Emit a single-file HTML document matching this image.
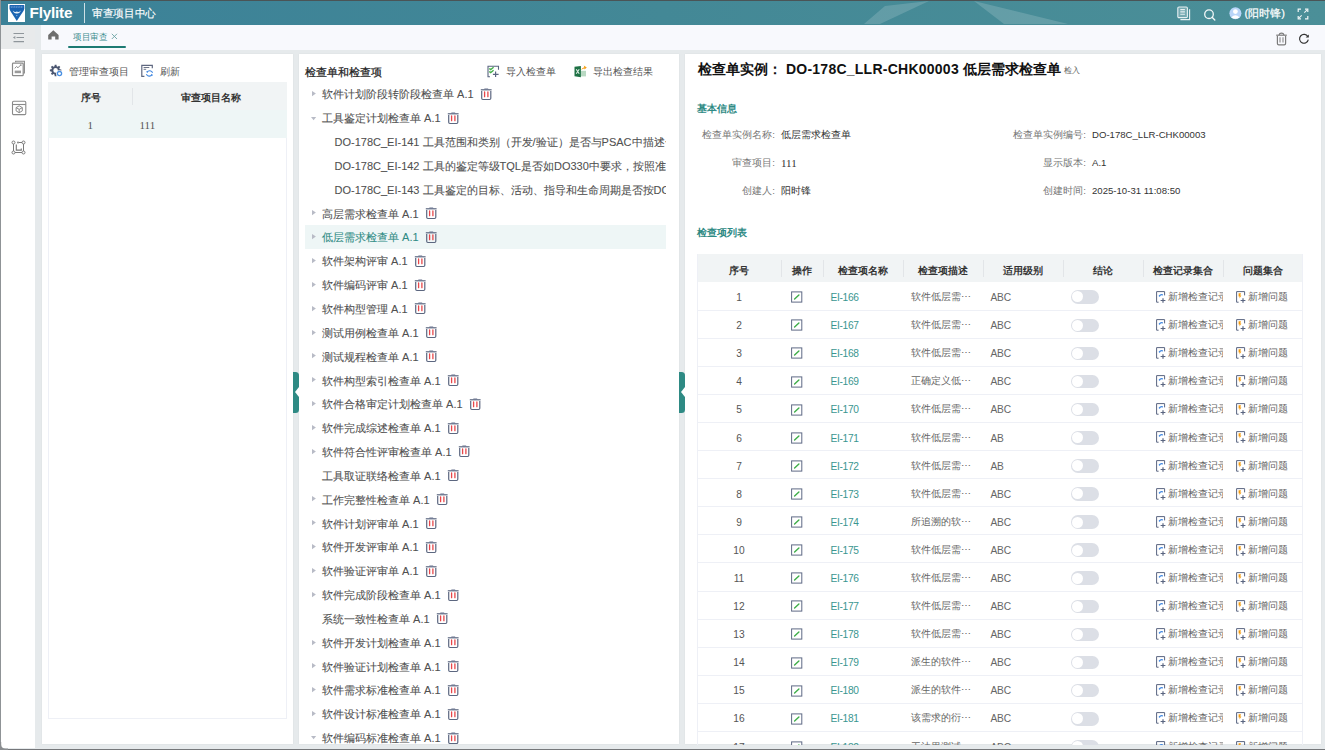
<!DOCTYPE html>
<html><head><meta charset="utf-8">
<style>
*{box-sizing:border-box;margin:0;padding:0}
html,body{width:1325px;height:750px;overflow:hidden;background:#e6eaec;font-family:"Liberation Sans",sans-serif;color:#333}
.abs{position:absolute}
#frtop{left:0;top:0;width:1325px;height:1px;background:#4a5456}
#frleft{left:0;top:0;width:1px;height:750px;background:#8f9396}
#frbot{left:0;top:748.6px;width:1325px;height:1.4px;background:#75777a}
#header{left:1px;top:1px;width:1324px;height:24px;background:linear-gradient(90deg,#3b8198 0%,#438896 50%,#4b8f98 100%);overflow:hidden}
#sidebar{left:1px;top:25px;width:34px;height:723px;background:#fff}
#collapse{left:1px;top:25px;width:34px;height:23.5px;background:#e8eaeb}
#tabbar{left:41px;top:25px;width:1284px;height:25px;background:#f8f9fd}
.panel{background:#fff;box-shadow:0 0 1.5px rgba(0,0,0,0.07)}
.t{position:absolute;white-space:nowrap;line-height:1}
svg{position:absolute;overflow:visible}
.tree{position:absolute;left:305px;top:82px;width:361px;height:662px;overflow:hidden}
.tr{position:relative;height:23.85px;line-height:23.85px;white-space:nowrap;font-size:11px;color:#505050;padding-left:17px;-webkit-text-stroke:0.08px currentColor}
.tr span{position:relative;top:1.4px}
.tr.l1{padding-left:29.5px}
.tr.sel{background:#eef6f6;color:#2e8b84}
.ar{position:absolute;left:6.7px;top:9.1px}
.ad{position:absolute;left:5.9px;top:10.7px}
.tbi{position:relative;display:inline-block;vertical-align:middle;margin-left:6px;top:-0.3px}
.info{position:absolute;height:10px;white-space:nowrap;font-size:9.6px;line-height:10px}
.info .lb{position:absolute;right:-90px;width:200px;text-align:right;color:#777}
.info .vl{position:absolute;left:96px;color:#333}
.tblwrap{position:absolute;left:697px;top:254px;width:606px;height:490.5px;overflow:hidden;border-left:1px solid #eef0f6;border-right:1px solid #eef0f6}
.grid{border-collapse:collapse;table-layout:fixed;width:606px;font-size:9.6px;margin-left:-1px}
.grid th{height:28px;background:#f1f4f5;font-weight:bold;color:#333;text-align:center;position:relative;padding:10.5px 0 0 0;vertical-align:top;line-height:12px}
.grid th+th:before{content:"";position:absolute;left:0;top:6px;height:16.5px;width:1px;background:#e2e5e8}
.grid td{height:28.1px;border-bottom:1px solid #eef0f6;padding:3px 0 0 0;white-space:nowrap;overflow:hidden;color:#666;position:relative}
.grid td.c1{text-align:center;color:#555;font-size:10.2px}
.grid td.c2{padding-left:9.5px}
.grid td.c3{color:#3a9690;padding-left:7.5px;font-size:10.2px;letter-spacing:-0.3px}
.grid td.c4{padding-left:8px}
.grid td.c5{padding-left:7.5px;font-size:10.2px;letter-spacing:-0.2px}
.ed{position:relative;display:inline-block;vertical-align:middle;top:-0.5px}
.ic{position:relative;display:inline-block;vertical-align:middle;top:-0.5px;margin-right:1px}
.grid td.c7{padding-left:12.5px;text-overflow:clip}
.grid td.c8{padding-left:12.5px}
.tg{position:absolute;left:8px;top:8px;width:27.6px;height:13.6px;border-radius:7px;background:#dcdfe6}
.tg:after{content:"";position:absolute;left:1.3px;top:1.3px;width:11px;height:11px;border-radius:50%;background:#fff}
.handle{position:absolute;top:372px;width:6px;height:41px;background:#2e8a84;border-radius:0 3.5px 3.5px 0}
.handle:after{content:"";position:absolute;right:0;top:15px;border-top:5px solid transparent;border-bottom:5px solid transparent;border-right:4.2px solid #fff}

</style></head><body>
<div class="abs" id="header">
  <svg width="1324" height="24" style="left:0;top:0">
    <polygon points="863,23 884,5 928,0 879,23" fill="rgba(255,255,255,0.16)"/>
    <polygon points="973,0 1003,23 1067,23" fill="rgba(255,255,255,0.16)"/>
  </svg>
</div>
<!-- logo -->
<div class="abs" style="left:7.6px;top:4px;width:17.5px;height:17.8px;background:#fff"></div>
<svg class="abs" style="left:7.6px;top:4px" width="18" height="18" viewBox="0 0 18 18">
  <path d="M1.5 1.7 Q1.5 1.1 2.1 1.1 H15.7 Q16.3 1.1 16.3 1.7 V4.2 Q16.2 5.6 15.6 6.8 L8.8 16.9 L2.2 6.8 Q1.6 5.6 1.5 4.2 Z" fill="#1b64b2"/>
  <path d="M2.6 2.4 H15.2 M2.8 3.4 H15" stroke="#7fa9dc" stroke-width="0.6" stroke-dasharray="1.2 0.5"/>
  <path d="M4.8 6.4 Q6.8 8.6 8.8 7.6 Q10.8 8.6 12.8 6.4 Q12 9.6 8.8 9.4 Q5.6 9.6 4.8 6.4Z" fill="#e4eef8"/>
  <circle cx="8.8" cy="11.6" r="0.55" fill="#a9c6ea"/>
</svg>
<div class="t" style="left:29.5px;top:5.2px;font-size:15.3px;font-weight:bold;color:#fff;letter-spacing:-0.2px">Flylite</div>
<div class="abs" style="left:84px;top:3px;width:1px;height:20px;background:rgba(255,255,255,0.75)"></div>
<div class="t" style="left:92px;top:8.3px;font-size:10.6px;color:#fff;-webkit-text-stroke:0.15px #fff;transform:scaleX(0.97);transform-origin:0 0">审查项目中心</div>
<!-- header right icons -->
<svg class="abs" style="left:1176px;top:6px" width="16" height="16" viewBox="0 0 16 16">
  <rect x="1.8" y="1" width="9.6" height="10.6" rx="1.2" fill="rgba(255,255,255,0.25)" stroke="#e6f0f2" stroke-width="1.1"/>
  <path d="M13.6 3.2 V13.6 H4.4" fill="none" stroke="#e6f0f2" stroke-width="1.1"/>
  <path d="M4.3 3.6 H8.9 M4.3 5.9 H8.9 M4.3 8.3 H8.9" stroke="#e6f0f2" stroke-width="1.1"/>
</svg>
<svg class="abs" style="left:1202px;top:7px" width="16" height="16" viewBox="0 0 16 16">
  <circle cx="7" cy="7.2" r="4.3" fill="none" stroke="#f2f7f8" stroke-width="1.3"/>
  <path d="M10.1 10.3 L12.8 13" stroke="#f2f7f8" stroke-width="1.4" stroke-linecap="round"/>
</svg>
<svg class="abs" style="left:1229px;top:7px" width="13" height="13" viewBox="0 0 13 13">
  <circle cx="6.4" cy="6.2" r="6" fill="#b9d5f8"/>
  <circle cx="6.4" cy="4.6" r="2.4" fill="#fff"/>
  <path d="M2.2 10.4 Q6.4 6.2 10.6 10.4 Q6.4 13.2 2.2 10.4Z" fill="#fff"/>
</svg>
<div class="t" style="left:1244.5px;top:7.8px;font-size:11px;color:#fff;-webkit-text-stroke:0.2px #fff">(阳时锋)</div>
<svg class="abs" style="left:1297px;top:7.5px" width="12" height="12" viewBox="0 0 12 12">
  <path d="M1.2 4 V1.2 H4 M8 1.2 H10.8 V4 M10.8 8 V10.8 H8 M4 10.8 H1.2 V8" fill="none" stroke="#eef5f6" stroke-width="1.2"/>
  <path d="M7.3 4.7 L10.2 1.8 M4.7 7.3 L1.8 10.2" stroke="#eef5f6" stroke-width="1.1"/>
</svg>
<div class="abs" id="frtop"></div>
<div class="abs" id="sidebar"></div>
<div class="abs" id="collapse"></div>
<div class="abs" id="tabbar"></div>
<!-- sidebar icons -->
<svg class="abs" style="left:12px;top:32px" width="13" height="12" viewBox="0 0 13 12">
  <path d="M1.5 1.5 H12 M4.5 5.5 H12 M1.5 9.6 H12" stroke="#8f969b" stroke-width="1.1"/>
  <path d="M3.3 3.9 L0.9 5.5 L3.3 7.1Z" fill="#8f969b"/>
</svg>
<svg class="abs" style="left:11px;top:60px" width="16" height="17" viewBox="0 0 16 17">
  <path d="M4.6 2.2 V1.2 H13.4 V13 H12.2" fill="none" stroke="#8a8a8a" stroke-width="1.1"/>
  <rect x="1.5" y="3.2" width="10.7" height="12.5" rx="0.8" fill="#fff" stroke="#8a8a8a" stroke-width="1.2"/>
  <path d="M3.7 8.4 L5.6 6.5 L7 7.8 L9.3 5.3" fill="none" stroke="#8a8a8a" stroke-width="1"/>
  <circle cx="9.8" cy="5.1" r="0.9" fill="#8a8a8a"/>
  <rect x="3.7" y="10.6" width="6.3" height="2.6" fill="#9a9a9a"/>
</svg>
<svg class="abs" style="left:11px;top:100px" width="16" height="16" viewBox="0 0 16 16">
  <rect x="1.5" y="1.2" width="13.3" height="13.4" rx="1.2" fill="none" stroke="#8a8a8a" stroke-width="1.1"/>
  <path d="M1.5 4.5 H14.8" stroke="#8a8a8a" stroke-width="1.1"/>
  <path d="M8.2 5.8 L11.3 7.6 V10.9 L8.2 12.7 L5.1 10.9 V7.6Z M5.1 7.6 L8.2 9.4 L11.3 7.6 M8.2 9.4 V12.7" fill="none" stroke="#8a8a8a" stroke-width="1"/>
</svg>
<svg class="abs" style="left:10px;top:139px" width="17" height="17" viewBox="0 0 17 17">
  <path d="M3.5 4.8 V12.2 M4.8 13.5 H12.2 M13.5 12.2 V4.8 M12.2 3.5 H9" fill="none" stroke="#7a7a7a" stroke-width="1"/>
  <circle cx="3.5" cy="3.5" r="1.5" fill="#fff" stroke="#7a7a7a" stroke-width="1"/>
  <circle cx="13.5" cy="3.5" r="1.5" fill="#fff" stroke="#7a7a7a" stroke-width="1"/>
  <circle cx="3.5" cy="13.5" r="1.5" fill="#fff" stroke="#7a7a7a" stroke-width="1"/>
  <circle cx="13.5" cy="13.5" r="1.5" fill="#fff" stroke="#7a7a7a" stroke-width="1"/>
  <circle cx="8" cy="3.5" r="0.9" fill="#7a7a7a"/>
  <path d="M6.3 5.6 V11.1 H11.3 V9.5" fill="none" stroke="#7a7a7a" stroke-width="1.1"/>
</svg>
<!-- tab bar -->
<svg class="abs" style="left:47.5px;top:29.5px" width="11" height="10" viewBox="0 0 11 10">
  <path d="M5.3 0.3 L10.6 5 V9.5 H7.2 V6.6 H3.6 V9.5 H0.2 V5Z" fill="#6e6e6e"/>
</svg>
<div class="t" style="left:73.2px;top:32.6px;font-size:8.5px;color:#3f8e8f;transform:scaleX(0.95);transform-origin:0 0">项目审查</div>
<svg class="abs" style="left:111px;top:32.5px" width="7" height="7" viewBox="0 0 7 7">
  <path d="M0.8 0.8 L6 6 M6 0.8 L0.8 6" stroke="#6aa3a3" stroke-width="0.9"/>
</svg>
<div class="abs" style="left:68px;top:46px;width:57.5px;height:2.3px;background:#1d7a73;border-radius:1px"></div>
<svg class="abs" style="left:1275px;top:32px" width="13" height="14" viewBox="0 0 13 14">
  <path d="M1.2 3.2 H11.8" stroke="#7b7b7b" stroke-width="1.2"/>
  <path d="M4.1 3 Q4.4 1.2 6.5 1.2 Q8.6 1.2 8.9 3" fill="none" stroke="#7b7b7b" stroke-width="1.2"/>
  <path d="M2.4 4 V11.4 Q2.4 12.8 3.8 12.8 H9.2 Q10.6 12.8 10.6 11.4 V4" fill="none" stroke="#7b7b7b" stroke-width="1.2"/>
  <path d="M5 5.2 V10.6 M8 5.2 V10.6" stroke="#8a8a8a" stroke-width="1.1"/>
</svg>
<svg class="abs" style="left:1298px;top:33px" width="12" height="12" viewBox="0 0 12 12">
  <path d="M9.8 3.6 A4.4 4.4 0 1 0 10.3 6.6" fill="none" stroke="#333" stroke-width="1.15"/>
  <path d="M10.8 1.5 V4.6 H7.7Z" fill="#333"/>
</svg>
<!-- panels -->
<div class="abs panel" style="left:42px;top:54px;width:250.5px;height:690px"></div>
<div class="abs panel" style="left:299px;top:54px;width:379.5px;height:690px"></div>
<div class="abs panel" style="left:685px;top:54px;width:636px;height:690px"></div>
<!-- left panel content -->
<svg class="abs" style="left:49px;top:64px" width="15" height="14" viewBox="0 0 15 14">
  <path d="M5.69 0.67 L7.51 0.67 L7.67 2.24 L8.79 2.70 L10.01 1.71 L11.29 2.99 L10.30 4.21 L10.76 5.33 L12.33 5.49 L12.33 7.31 L10.76 7.47 L10.30 8.59 L11.29 9.81 L10.01 11.09 L8.79 10.10 L7.67 10.56 L7.51 12.13 L5.69 12.13 L5.53 10.56 L4.41 10.10 L3.19 11.09 L1.91 9.81 L2.90 8.59 L2.44 7.47 L0.87 7.31 L0.87 5.49 L2.44 5.33 L2.90 4.21 L1.91 2.99 L3.19 1.71 L4.41 2.70 L5.53 2.24Z M8.90 6.40 A2.3 2.3 0 1 0 4.30 6.40 A2.3 2.3 0 1 0 8.90 6.40Z" fill="#4b5670" fill-rule="evenodd"/>
  <circle cx="10.5" cy="9.6" r="3.4" fill="#fff"/>
  <circle cx="10.5" cy="9.6" r="2.1" fill="none" stroke="#4a90e2" stroke-width="1.3"/>
</svg>
<div class="t" style="left:68.5px;top:66.7px;font-size:9.7px;color:#555">管理审查项目</div>
<svg class="abs" style="left:140px;top:64px" width="14" height="14" viewBox="0 0 14 14">
  <path d="M4.4 12.3 H1.8 V1.3 H12.3 V4.3" fill="none" stroke="#5f6880" stroke-width="1.2"/>
  <path d="M3.6 3.5 H9.3 M3.6 5.3 H6.2" stroke="#6d7588" stroke-width="1"/>
  <path d="M12.6 8.8 A3.1 3.1 0 0 0 7 8.3 M6.4 10.1 A3.1 3.1 0 0 0 12 10.6" fill="none" stroke="#3f86e0" stroke-width="1.1"/>
  <path d="M6.2 7.2 L7.1 9.1 L8.4 7.6Z M12.9 11.7 L12 9.8 L10.7 11.3Z" fill="#3f86e0"/>
</svg>
<div class="t" style="left:160px;top:66.7px;font-size:9.7px;color:#555">刷新</div>
<div class="abs" style="left:48px;top:82.4px;width:239px;height:636.5px;border:1px solid #eef0f6;border-top:none"></div>
<div class="abs" style="left:48px;top:82.4px;width:239px;height:27.8px;background:#f1f4f5"></div>
<div class="abs" style="left:132px;top:88.4px;width:1px;height:16.4px;background:#e2e5e8"></div>
<div class="t" style="left:80.5px;top:93px;font-size:9.7px;font-weight:bold;color:#333">序号</div>
<div class="t" style="left:180.5px;top:93px;font-size:9.7px;font-weight:bold;color:#333">审查项目名称</div>
<div class="abs" style="left:48px;top:110.2px;width:239px;height:28.2px;background:#eef6f6"></div>
<div class="t" style="left:87.6px;top:119.8px;font-size:11px;color:#555;font-family:'Liberation Serif',serif">1</div>
<div class="t" style="left:139.5px;top:119.8px;font-size:11px;color:#555;font-family:'Liberation Serif',serif">111</div>
<!-- middle panel -->
<div class="t" style="left:305px;top:66.8px;font-size:11.2px;color:#222;-webkit-text-stroke:0.25px #222">检查单和检查项</div>
<svg class="abs" style="left:487px;top:65px" width="13" height="13" viewBox="0 0 13 13">
  <path d="M3 11.8 H1 V1.2 H11.5 V4.8" fill="none" stroke="#5a6580" stroke-width="1.1"/>
  <path d="M2.2 3.4 L3.7 4.6 L6.6 2.2 M2.2 6.4 L3.7 7.6 L6.6 5.2" fill="none" stroke="#46b04a" stroke-width="1.3"/>
  <path d="M8.6 6.6 V11.9 M5.9 9.3 H11.6" stroke="#5a6580" stroke-width="1.2"/>
</svg>
<div class="t" style="left:506px;top:66.5px;font-size:9.8px;color:#555">导入检查单</div>
<svg class="abs" style="left:574px;top:65px" width="13" height="13" viewBox="0 0 13 13">
  <path d="M0.5 1.8 L6.9 0.9 V12.2 L0.5 11.3Z" fill="#1e7145"/>
  <path d="M2.2 4.2 L5.2 8.8 M5.2 4.2 L2.2 8.8" stroke="#dfeee5" stroke-width="1.1"/>
  <rect x="7" y="5.8" width="5" height="5.6" fill="#b9d9c3"/>
  <path d="M7 5 Q8 2.6 10.2 2.2 L9.8 0.6 L12.8 2.6 L10.6 4.6 L10.4 3.4 Q8.6 3.6 7 5Z" fill="#f7a21b"/>
</svg>
<div class="t" style="left:592.5px;top:66.5px;font-size:9.8px;color:#555">导出检查结果</div>
<div class="tree">
<div class="tr"><svg class="ar" width="5" height="6" viewBox="0 0 5 6"><path d="M0 0 L3.9 2.6 L0 5.2Z" fill="#b8bbc6"/></svg><span>软件计划阶段转阶段检查单 A.1</span><svg class="tbi" width="12" height="12" viewBox="0 0 12 12"><path d="M0.8 1.8 H11.6" stroke="#5c6780" stroke-width="1.2"/><path d="M3.9 1.5 L4.5 0.4 H8 L8.6 1.5Z" fill="#6a7490"/><path d="M1.7 3.1 V10.3 Q1.7 11.5 2.9 11.5 H9.6 Q10.8 11.5 10.8 10.3 V3.1" fill="none" stroke="#5c6780" stroke-width="1.2"/><path d="M4.6 3.9 V8.7 M7.9 3.9 V8.7" stroke="#e8474a" stroke-width="1.3" stroke-linecap="round"/></svg></div>
<div class="tr"><svg class="ad" width="6" height="4" viewBox="0 0 6 4"><path d="M0 0 H5.2 L2.6 3.3Z" fill="#b8bbc6"/></svg><span>工具鉴定计划检查单 A.1</span><svg class="tbi" width="12" height="12" viewBox="0 0 12 12"><path d="M0.8 1.8 H11.6" stroke="#5c6780" stroke-width="1.2"/><path d="M3.9 1.5 L4.5 0.4 H8 L8.6 1.5Z" fill="#6a7490"/><path d="M1.7 3.1 V10.3 Q1.7 11.5 2.9 11.5 H9.6 Q10.8 11.5 10.8 10.3 V3.1" fill="none" stroke="#5c6780" stroke-width="1.2"/><path d="M4.6 3.9 V8.7 M7.9 3.9 V8.7" stroke="#e8474a" stroke-width="1.3" stroke-linecap="round"/></svg></div>
<div class="tr l1"><span>DO-178C_EI-141 工具范围和类别（开发/验证）是否与PSAC中描述一致</span></div>
<div class="tr l1"><span>DO-178C_EI-142 工具的鉴定等级TQL是否如DO330中要求，按照准则确定</span></div>
<div class="tr l1"><span>DO-178C_EI-143 工具鉴定的目标、活动、指导和生命周期是否按DO330要求</span></div>
<div class="tr"><svg class="ar" width="5" height="6" viewBox="0 0 5 6"><path d="M0 0 L3.9 2.6 L0 5.2Z" fill="#b8bbc6"/></svg><span>高层需求检查单 A.1</span><svg class="tbi" width="12" height="12" viewBox="0 0 12 12"><path d="M0.8 1.8 H11.6" stroke="#5c6780" stroke-width="1.2"/><path d="M3.9 1.5 L4.5 0.4 H8 L8.6 1.5Z" fill="#6a7490"/><path d="M1.7 3.1 V10.3 Q1.7 11.5 2.9 11.5 H9.6 Q10.8 11.5 10.8 10.3 V3.1" fill="none" stroke="#5c6780" stroke-width="1.2"/><path d="M4.6 3.9 V8.7 M7.9 3.9 V8.7" stroke="#e8474a" stroke-width="1.3" stroke-linecap="round"/></svg></div>
<div class="tr sel"><svg class="ar" width="5" height="6" viewBox="0 0 5 6"><path d="M0 0 L3.9 2.6 L0 5.2Z" fill="#b8bbc6"/></svg><span>低层需求检查单 A.1</span><svg class="tbi" width="12" height="12" viewBox="0 0 12 12"><path d="M0.8 1.8 H11.6" stroke="#5c6780" stroke-width="1.2"/><path d="M3.9 1.5 L4.5 0.4 H8 L8.6 1.5Z" fill="#6a7490"/><path d="M1.7 3.1 V10.3 Q1.7 11.5 2.9 11.5 H9.6 Q10.8 11.5 10.8 10.3 V3.1" fill="none" stroke="#5c6780" stroke-width="1.2"/><path d="M4.6 3.9 V8.7 M7.9 3.9 V8.7" stroke="#e8474a" stroke-width="1.3" stroke-linecap="round"/></svg></div>
<div class="tr"><svg class="ar" width="5" height="6" viewBox="0 0 5 6"><path d="M0 0 L3.9 2.6 L0 5.2Z" fill="#b8bbc6"/></svg><span>软件架构评审 A.1</span><svg class="tbi" width="12" height="12" viewBox="0 0 12 12"><path d="M0.8 1.8 H11.6" stroke="#5c6780" stroke-width="1.2"/><path d="M3.9 1.5 L4.5 0.4 H8 L8.6 1.5Z" fill="#6a7490"/><path d="M1.7 3.1 V10.3 Q1.7 11.5 2.9 11.5 H9.6 Q10.8 11.5 10.8 10.3 V3.1" fill="none" stroke="#5c6780" stroke-width="1.2"/><path d="M4.6 3.9 V8.7 M7.9 3.9 V8.7" stroke="#e8474a" stroke-width="1.3" stroke-linecap="round"/></svg></div>
<div class="tr"><svg class="ar" width="5" height="6" viewBox="0 0 5 6"><path d="M0 0 L3.9 2.6 L0 5.2Z" fill="#b8bbc6"/></svg><span>软件编码评审 A.1</span><svg class="tbi" width="12" height="12" viewBox="0 0 12 12"><path d="M0.8 1.8 H11.6" stroke="#5c6780" stroke-width="1.2"/><path d="M3.9 1.5 L4.5 0.4 H8 L8.6 1.5Z" fill="#6a7490"/><path d="M1.7 3.1 V10.3 Q1.7 11.5 2.9 11.5 H9.6 Q10.8 11.5 10.8 10.3 V3.1" fill="none" stroke="#5c6780" stroke-width="1.2"/><path d="M4.6 3.9 V8.7 M7.9 3.9 V8.7" stroke="#e8474a" stroke-width="1.3" stroke-linecap="round"/></svg></div>
<div class="tr"><svg class="ar" width="5" height="6" viewBox="0 0 5 6"><path d="M0 0 L3.9 2.6 L0 5.2Z" fill="#b8bbc6"/></svg><span>软件构型管理 A.1</span><svg class="tbi" width="12" height="12" viewBox="0 0 12 12"><path d="M0.8 1.8 H11.6" stroke="#5c6780" stroke-width="1.2"/><path d="M3.9 1.5 L4.5 0.4 H8 L8.6 1.5Z" fill="#6a7490"/><path d="M1.7 3.1 V10.3 Q1.7 11.5 2.9 11.5 H9.6 Q10.8 11.5 10.8 10.3 V3.1" fill="none" stroke="#5c6780" stroke-width="1.2"/><path d="M4.6 3.9 V8.7 M7.9 3.9 V8.7" stroke="#e8474a" stroke-width="1.3" stroke-linecap="round"/></svg></div>
<div class="tr"><svg class="ar" width="5" height="6" viewBox="0 0 5 6"><path d="M0 0 L3.9 2.6 L0 5.2Z" fill="#b8bbc6"/></svg><span>测试用例检查单 A.1</span><svg class="tbi" width="12" height="12" viewBox="0 0 12 12"><path d="M0.8 1.8 H11.6" stroke="#5c6780" stroke-width="1.2"/><path d="M3.9 1.5 L4.5 0.4 H8 L8.6 1.5Z" fill="#6a7490"/><path d="M1.7 3.1 V10.3 Q1.7 11.5 2.9 11.5 H9.6 Q10.8 11.5 10.8 10.3 V3.1" fill="none" stroke="#5c6780" stroke-width="1.2"/><path d="M4.6 3.9 V8.7 M7.9 3.9 V8.7" stroke="#e8474a" stroke-width="1.3" stroke-linecap="round"/></svg></div>
<div class="tr"><svg class="ar" width="5" height="6" viewBox="0 0 5 6"><path d="M0 0 L3.9 2.6 L0 5.2Z" fill="#b8bbc6"/></svg><span>测试规程检查单 A.1</span><svg class="tbi" width="12" height="12" viewBox="0 0 12 12"><path d="M0.8 1.8 H11.6" stroke="#5c6780" stroke-width="1.2"/><path d="M3.9 1.5 L4.5 0.4 H8 L8.6 1.5Z" fill="#6a7490"/><path d="M1.7 3.1 V10.3 Q1.7 11.5 2.9 11.5 H9.6 Q10.8 11.5 10.8 10.3 V3.1" fill="none" stroke="#5c6780" stroke-width="1.2"/><path d="M4.6 3.9 V8.7 M7.9 3.9 V8.7" stroke="#e8474a" stroke-width="1.3" stroke-linecap="round"/></svg></div>
<div class="tr"><svg class="ar" width="5" height="6" viewBox="0 0 5 6"><path d="M0 0 L3.9 2.6 L0 5.2Z" fill="#b8bbc6"/></svg><span>软件构型索引检查单 A.1</span><svg class="tbi" width="12" height="12" viewBox="0 0 12 12"><path d="M0.8 1.8 H11.6" stroke="#5c6780" stroke-width="1.2"/><path d="M3.9 1.5 L4.5 0.4 H8 L8.6 1.5Z" fill="#6a7490"/><path d="M1.7 3.1 V10.3 Q1.7 11.5 2.9 11.5 H9.6 Q10.8 11.5 10.8 10.3 V3.1" fill="none" stroke="#5c6780" stroke-width="1.2"/><path d="M4.6 3.9 V8.7 M7.9 3.9 V8.7" stroke="#e8474a" stroke-width="1.3" stroke-linecap="round"/></svg></div>
<div class="tr"><svg class="ar" width="5" height="6" viewBox="0 0 5 6"><path d="M0 0 L3.9 2.6 L0 5.2Z" fill="#b8bbc6"/></svg><span>软件合格审定计划检查单 A.1</span><svg class="tbi" width="12" height="12" viewBox="0 0 12 12"><path d="M0.8 1.8 H11.6" stroke="#5c6780" stroke-width="1.2"/><path d="M3.9 1.5 L4.5 0.4 H8 L8.6 1.5Z" fill="#6a7490"/><path d="M1.7 3.1 V10.3 Q1.7 11.5 2.9 11.5 H9.6 Q10.8 11.5 10.8 10.3 V3.1" fill="none" stroke="#5c6780" stroke-width="1.2"/><path d="M4.6 3.9 V8.7 M7.9 3.9 V8.7" stroke="#e8474a" stroke-width="1.3" stroke-linecap="round"/></svg></div>
<div class="tr"><svg class="ar" width="5" height="6" viewBox="0 0 5 6"><path d="M0 0 L3.9 2.6 L0 5.2Z" fill="#b8bbc6"/></svg><span>软件完成综述检查单 A.1</span><svg class="tbi" width="12" height="12" viewBox="0 0 12 12"><path d="M0.8 1.8 H11.6" stroke="#5c6780" stroke-width="1.2"/><path d="M3.9 1.5 L4.5 0.4 H8 L8.6 1.5Z" fill="#6a7490"/><path d="M1.7 3.1 V10.3 Q1.7 11.5 2.9 11.5 H9.6 Q10.8 11.5 10.8 10.3 V3.1" fill="none" stroke="#5c6780" stroke-width="1.2"/><path d="M4.6 3.9 V8.7 M7.9 3.9 V8.7" stroke="#e8474a" stroke-width="1.3" stroke-linecap="round"/></svg></div>
<div class="tr"><svg class="ar" width="5" height="6" viewBox="0 0 5 6"><path d="M0 0 L3.9 2.6 L0 5.2Z" fill="#b8bbc6"/></svg><span>软件符合性评审检查单 A.1</span><svg class="tbi" width="12" height="12" viewBox="0 0 12 12"><path d="M0.8 1.8 H11.6" stroke="#5c6780" stroke-width="1.2"/><path d="M3.9 1.5 L4.5 0.4 H8 L8.6 1.5Z" fill="#6a7490"/><path d="M1.7 3.1 V10.3 Q1.7 11.5 2.9 11.5 H9.6 Q10.8 11.5 10.8 10.3 V3.1" fill="none" stroke="#5c6780" stroke-width="1.2"/><path d="M4.6 3.9 V8.7 M7.9 3.9 V8.7" stroke="#e8474a" stroke-width="1.3" stroke-linecap="round"/></svg></div>
<div class="tr"><span>工具取证联络检查单 A.1</span><svg class="tbi" width="12" height="12" viewBox="0 0 12 12"><path d="M0.8 1.8 H11.6" stroke="#5c6780" stroke-width="1.2"/><path d="M3.9 1.5 L4.5 0.4 H8 L8.6 1.5Z" fill="#6a7490"/><path d="M1.7 3.1 V10.3 Q1.7 11.5 2.9 11.5 H9.6 Q10.8 11.5 10.8 10.3 V3.1" fill="none" stroke="#5c6780" stroke-width="1.2"/><path d="M4.6 3.9 V8.7 M7.9 3.9 V8.7" stroke="#e8474a" stroke-width="1.3" stroke-linecap="round"/></svg></div>
<div class="tr"><svg class="ar" width="5" height="6" viewBox="0 0 5 6"><path d="M0 0 L3.9 2.6 L0 5.2Z" fill="#b8bbc6"/></svg><span>工作完整性检查单 A.1</span><svg class="tbi" width="12" height="12" viewBox="0 0 12 12"><path d="M0.8 1.8 H11.6" stroke="#5c6780" stroke-width="1.2"/><path d="M3.9 1.5 L4.5 0.4 H8 L8.6 1.5Z" fill="#6a7490"/><path d="M1.7 3.1 V10.3 Q1.7 11.5 2.9 11.5 H9.6 Q10.8 11.5 10.8 10.3 V3.1" fill="none" stroke="#5c6780" stroke-width="1.2"/><path d="M4.6 3.9 V8.7 M7.9 3.9 V8.7" stroke="#e8474a" stroke-width="1.3" stroke-linecap="round"/></svg></div>
<div class="tr"><svg class="ar" width="5" height="6" viewBox="0 0 5 6"><path d="M0 0 L3.9 2.6 L0 5.2Z" fill="#b8bbc6"/></svg><span>软件计划评审单 A.1</span><svg class="tbi" width="12" height="12" viewBox="0 0 12 12"><path d="M0.8 1.8 H11.6" stroke="#5c6780" stroke-width="1.2"/><path d="M3.9 1.5 L4.5 0.4 H8 L8.6 1.5Z" fill="#6a7490"/><path d="M1.7 3.1 V10.3 Q1.7 11.5 2.9 11.5 H9.6 Q10.8 11.5 10.8 10.3 V3.1" fill="none" stroke="#5c6780" stroke-width="1.2"/><path d="M4.6 3.9 V8.7 M7.9 3.9 V8.7" stroke="#e8474a" stroke-width="1.3" stroke-linecap="round"/></svg></div>
<div class="tr"><svg class="ar" width="5" height="6" viewBox="0 0 5 6"><path d="M0 0 L3.9 2.6 L0 5.2Z" fill="#b8bbc6"/></svg><span>软件开发评审单 A.1</span><svg class="tbi" width="12" height="12" viewBox="0 0 12 12"><path d="M0.8 1.8 H11.6" stroke="#5c6780" stroke-width="1.2"/><path d="M3.9 1.5 L4.5 0.4 H8 L8.6 1.5Z" fill="#6a7490"/><path d="M1.7 3.1 V10.3 Q1.7 11.5 2.9 11.5 H9.6 Q10.8 11.5 10.8 10.3 V3.1" fill="none" stroke="#5c6780" stroke-width="1.2"/><path d="M4.6 3.9 V8.7 M7.9 3.9 V8.7" stroke="#e8474a" stroke-width="1.3" stroke-linecap="round"/></svg></div>
<div class="tr"><svg class="ar" width="5" height="6" viewBox="0 0 5 6"><path d="M0 0 L3.9 2.6 L0 5.2Z" fill="#b8bbc6"/></svg><span>软件验证评审单 A.1</span><svg class="tbi" width="12" height="12" viewBox="0 0 12 12"><path d="M0.8 1.8 H11.6" stroke="#5c6780" stroke-width="1.2"/><path d="M3.9 1.5 L4.5 0.4 H8 L8.6 1.5Z" fill="#6a7490"/><path d="M1.7 3.1 V10.3 Q1.7 11.5 2.9 11.5 H9.6 Q10.8 11.5 10.8 10.3 V3.1" fill="none" stroke="#5c6780" stroke-width="1.2"/><path d="M4.6 3.9 V8.7 M7.9 3.9 V8.7" stroke="#e8474a" stroke-width="1.3" stroke-linecap="round"/></svg></div>
<div class="tr"><svg class="ar" width="5" height="6" viewBox="0 0 5 6"><path d="M0 0 L3.9 2.6 L0 5.2Z" fill="#b8bbc6"/></svg><span>软件完成阶段检查单 A.1</span><svg class="tbi" width="12" height="12" viewBox="0 0 12 12"><path d="M0.8 1.8 H11.6" stroke="#5c6780" stroke-width="1.2"/><path d="M3.9 1.5 L4.5 0.4 H8 L8.6 1.5Z" fill="#6a7490"/><path d="M1.7 3.1 V10.3 Q1.7 11.5 2.9 11.5 H9.6 Q10.8 11.5 10.8 10.3 V3.1" fill="none" stroke="#5c6780" stroke-width="1.2"/><path d="M4.6 3.9 V8.7 M7.9 3.9 V8.7" stroke="#e8474a" stroke-width="1.3" stroke-linecap="round"/></svg></div>
<div class="tr"><span>系统一致性检查单 A.1</span><svg class="tbi" width="12" height="12" viewBox="0 0 12 12"><path d="M0.8 1.8 H11.6" stroke="#5c6780" stroke-width="1.2"/><path d="M3.9 1.5 L4.5 0.4 H8 L8.6 1.5Z" fill="#6a7490"/><path d="M1.7 3.1 V10.3 Q1.7 11.5 2.9 11.5 H9.6 Q10.8 11.5 10.8 10.3 V3.1" fill="none" stroke="#5c6780" stroke-width="1.2"/><path d="M4.6 3.9 V8.7 M7.9 3.9 V8.7" stroke="#e8474a" stroke-width="1.3" stroke-linecap="round"/></svg></div>
<div class="tr"><svg class="ar" width="5" height="6" viewBox="0 0 5 6"><path d="M0 0 L3.9 2.6 L0 5.2Z" fill="#b8bbc6"/></svg><span>软件开发计划检查单 A.1</span><svg class="tbi" width="12" height="12" viewBox="0 0 12 12"><path d="M0.8 1.8 H11.6" stroke="#5c6780" stroke-width="1.2"/><path d="M3.9 1.5 L4.5 0.4 H8 L8.6 1.5Z" fill="#6a7490"/><path d="M1.7 3.1 V10.3 Q1.7 11.5 2.9 11.5 H9.6 Q10.8 11.5 10.8 10.3 V3.1" fill="none" stroke="#5c6780" stroke-width="1.2"/><path d="M4.6 3.9 V8.7 M7.9 3.9 V8.7" stroke="#e8474a" stroke-width="1.3" stroke-linecap="round"/></svg></div>
<div class="tr"><svg class="ar" width="5" height="6" viewBox="0 0 5 6"><path d="M0 0 L3.9 2.6 L0 5.2Z" fill="#b8bbc6"/></svg><span>软件验证计划检查单 A.1</span><svg class="tbi" width="12" height="12" viewBox="0 0 12 12"><path d="M0.8 1.8 H11.6" stroke="#5c6780" stroke-width="1.2"/><path d="M3.9 1.5 L4.5 0.4 H8 L8.6 1.5Z" fill="#6a7490"/><path d="M1.7 3.1 V10.3 Q1.7 11.5 2.9 11.5 H9.6 Q10.8 11.5 10.8 10.3 V3.1" fill="none" stroke="#5c6780" stroke-width="1.2"/><path d="M4.6 3.9 V8.7 M7.9 3.9 V8.7" stroke="#e8474a" stroke-width="1.3" stroke-linecap="round"/></svg></div>
<div class="tr"><svg class="ar" width="5" height="6" viewBox="0 0 5 6"><path d="M0 0 L3.9 2.6 L0 5.2Z" fill="#b8bbc6"/></svg><span>软件需求标准检查单 A.1</span><svg class="tbi" width="12" height="12" viewBox="0 0 12 12"><path d="M0.8 1.8 H11.6" stroke="#5c6780" stroke-width="1.2"/><path d="M3.9 1.5 L4.5 0.4 H8 L8.6 1.5Z" fill="#6a7490"/><path d="M1.7 3.1 V10.3 Q1.7 11.5 2.9 11.5 H9.6 Q10.8 11.5 10.8 10.3 V3.1" fill="none" stroke="#5c6780" stroke-width="1.2"/><path d="M4.6 3.9 V8.7 M7.9 3.9 V8.7" stroke="#e8474a" stroke-width="1.3" stroke-linecap="round"/></svg></div>
<div class="tr"><svg class="ar" width="5" height="6" viewBox="0 0 5 6"><path d="M0 0 L3.9 2.6 L0 5.2Z" fill="#b8bbc6"/></svg><span>软件设计标准检查单 A.1</span><svg class="tbi" width="12" height="12" viewBox="0 0 12 12"><path d="M0.8 1.8 H11.6" stroke="#5c6780" stroke-width="1.2"/><path d="M3.9 1.5 L4.5 0.4 H8 L8.6 1.5Z" fill="#6a7490"/><path d="M1.7 3.1 V10.3 Q1.7 11.5 2.9 11.5 H9.6 Q10.8 11.5 10.8 10.3 V3.1" fill="none" stroke="#5c6780" stroke-width="1.2"/><path d="M4.6 3.9 V8.7 M7.9 3.9 V8.7" stroke="#e8474a" stroke-width="1.3" stroke-linecap="round"/></svg></div>
<div class="tr"><svg class="ad" width="6" height="4" viewBox="0 0 6 4"><path d="M0 0 H5.2 L2.6 3.3Z" fill="#b8bbc6"/></svg><span>软件编码标准检查单 A.1</span><svg class="tbi" width="12" height="12" viewBox="0 0 12 12"><path d="M0.8 1.8 H11.6" stroke="#5c6780" stroke-width="1.2"/><path d="M3.9 1.5 L4.5 0.4 H8 L8.6 1.5Z" fill="#6a7490"/><path d="M1.7 3.1 V10.3 Q1.7 11.5 2.9 11.5 H9.6 Q10.8 11.5 10.8 10.3 V3.1" fill="none" stroke="#5c6780" stroke-width="1.2"/><path d="M4.6 3.9 V8.7 M7.9 3.9 V8.7" stroke="#e8474a" stroke-width="1.3" stroke-linecap="round"/></svg></div>
</div>
<div class="handle" style="left:293px"></div>
<div class="handle" style="left:679px"></div>
<!-- right panel -->
<div class="t" style="left:698px;top:61.5px;font-size:14px;font-weight:bold;color:#111">检查单实例： <span style="letter-spacing:0.25px">DO-178C_LLR-CHK00003</span> 低层需求检查单</div>
<div class="t" style="left:1064px;top:66.5px;font-size:8px;color:#666">检入</div>
<div class="t" style="left:697px;top:103.5px;font-size:9.6px;font-weight:bold;color:#2e8a84">基本信息</div>
<div class="info" style="left:685px;top:130px">
 <div class="lb">检查单实例名称:</div><div class="vl">低层需求检查单</div>
</div>
<div class="info" style="left:685px;top:158px">
 <div class="lb">审查项目:</div><div class="vl" style="font-family:'Liberation Serif',serif;font-size:11px;top:-0.5px">111</div>
</div>
<div class="info" style="left:685px;top:186px">
 <div class="lb">创建人:</div><div class="vl">阳时锋</div>
</div>
<div class="info" style="left:996px;top:130px">
 <div class="lb">检查单实例编号:</div><div class="vl">DO-178C_LLR-CHK00003</div>
</div>
<div class="info" style="left:996px;top:158px">
 <div class="lb">显示版本:</div><div class="vl">A.1</div>
</div>
<div class="info" style="left:996px;top:186px">
 <div class="lb">创建时间:</div><div class="vl">2025-10-31 11:08:50</div>
</div>
<div class="t" style="left:697px;top:227.5px;font-size:9.6px;font-weight:bold;color:#2e8a84">检查项列表</div>
<div class="tblwrap">
<table class="grid">
<colgroup><col style="width:84px"><col style="width:42px"><col style="width:80px"><col style="width:80px"><col style="width:80px"><col style="width:80px"><col style="width:80px"><col style="width:80px"></colgroup>
<thead><tr><th>序号</th><th>操作</th><th>检查项名称</th><th>检查项描述</th><th>适用级别</th><th>结论</th><th>检查记录集合</th><th>问题集合</th></tr></thead>
<tbody>
<tr><td class="c1">1</td><td class="c2"><svg class="ed" width="12" height="12" viewBox="0 0 12 12"><rect x="0.6" y="0.9" width="10.2" height="10.2" fill="#fff" stroke="#5f6a85" stroke-width="1"/><path d="M3.6 8 L7.9 3.9" stroke="#3fae49" stroke-width="1.4" stroke-linecap="round"/></svg></td><td class="c3">EI-166</td><td class="c4">软件低层需⋯</td><td class="c5">ABC</td><td class="c6"><i class="tg"></i></td><td class="c7"><svg class="ic" width="11" height="12" viewBox="0 0 11 12"><path d="M2.6 11.2 H0.6 V0.6 H8.6 V4.4" fill="none" stroke="#5a6580" stroke-width="1"/><path d="M3.4 5 Q4.6 3.2 6.4 3.8" fill="none" stroke="#3f86e0" stroke-width="1.4" stroke-linecap="round"/><path d="M7 7.2 V11.8 M4.6 9.5 H9.4" stroke="#5a6580" stroke-width="1.2"/></svg><span>新增检查记录</span></td><td class="c8"><svg class="ic" width="11" height="12" viewBox="0 0 11 12"><path d="M2.6 11.2 H0.6 V0.6 H8.6 V4.4" fill="none" stroke="#5a6580" stroke-width="1"/><path d="M2.6 2.2 H5 L4.2 4.4 H5.4 L3.4 7.6 L3.7 5.4 H2.6Z" fill="#f59a0c"/><path d="M7 7.2 V11.8 M4.6 9.5 H9.4" stroke="#5a6580" stroke-width="1.2"/></svg><span>新增问题</span></td></tr>
<tr><td class="c1">2</td><td class="c2"><svg class="ed" width="12" height="12" viewBox="0 0 12 12"><rect x="0.6" y="0.9" width="10.2" height="10.2" fill="#fff" stroke="#5f6a85" stroke-width="1"/><path d="M3.6 8 L7.9 3.9" stroke="#3fae49" stroke-width="1.4" stroke-linecap="round"/></svg></td><td class="c3">EI-167</td><td class="c4">软件低层需⋯</td><td class="c5">ABC</td><td class="c6"><i class="tg"></i></td><td class="c7"><svg class="ic" width="11" height="12" viewBox="0 0 11 12"><path d="M2.6 11.2 H0.6 V0.6 H8.6 V4.4" fill="none" stroke="#5a6580" stroke-width="1"/><path d="M3.4 5 Q4.6 3.2 6.4 3.8" fill="none" stroke="#3f86e0" stroke-width="1.4" stroke-linecap="round"/><path d="M7 7.2 V11.8 M4.6 9.5 H9.4" stroke="#5a6580" stroke-width="1.2"/></svg><span>新增检查记录</span></td><td class="c8"><svg class="ic" width="11" height="12" viewBox="0 0 11 12"><path d="M2.6 11.2 H0.6 V0.6 H8.6 V4.4" fill="none" stroke="#5a6580" stroke-width="1"/><path d="M2.6 2.2 H5 L4.2 4.4 H5.4 L3.4 7.6 L3.7 5.4 H2.6Z" fill="#f59a0c"/><path d="M7 7.2 V11.8 M4.6 9.5 H9.4" stroke="#5a6580" stroke-width="1.2"/></svg><span>新增问题</span></td></tr>
<tr><td class="c1">3</td><td class="c2"><svg class="ed" width="12" height="12" viewBox="0 0 12 12"><rect x="0.6" y="0.9" width="10.2" height="10.2" fill="#fff" stroke="#5f6a85" stroke-width="1"/><path d="M3.6 8 L7.9 3.9" stroke="#3fae49" stroke-width="1.4" stroke-linecap="round"/></svg></td><td class="c3">EI-168</td><td class="c4">软件低层需⋯</td><td class="c5">ABC</td><td class="c6"><i class="tg"></i></td><td class="c7"><svg class="ic" width="11" height="12" viewBox="0 0 11 12"><path d="M2.6 11.2 H0.6 V0.6 H8.6 V4.4" fill="none" stroke="#5a6580" stroke-width="1"/><path d="M3.4 5 Q4.6 3.2 6.4 3.8" fill="none" stroke="#3f86e0" stroke-width="1.4" stroke-linecap="round"/><path d="M7 7.2 V11.8 M4.6 9.5 H9.4" stroke="#5a6580" stroke-width="1.2"/></svg><span>新增检查记录</span></td><td class="c8"><svg class="ic" width="11" height="12" viewBox="0 0 11 12"><path d="M2.6 11.2 H0.6 V0.6 H8.6 V4.4" fill="none" stroke="#5a6580" stroke-width="1"/><path d="M2.6 2.2 H5 L4.2 4.4 H5.4 L3.4 7.6 L3.7 5.4 H2.6Z" fill="#f59a0c"/><path d="M7 7.2 V11.8 M4.6 9.5 H9.4" stroke="#5a6580" stroke-width="1.2"/></svg><span>新增问题</span></td></tr>
<tr><td class="c1">4</td><td class="c2"><svg class="ed" width="12" height="12" viewBox="0 0 12 12"><rect x="0.6" y="0.9" width="10.2" height="10.2" fill="#fff" stroke="#5f6a85" stroke-width="1"/><path d="M3.6 8 L7.9 3.9" stroke="#3fae49" stroke-width="1.4" stroke-linecap="round"/></svg></td><td class="c3">EI-169</td><td class="c4">正确定义低⋯</td><td class="c5">ABC</td><td class="c6"><i class="tg"></i></td><td class="c7"><svg class="ic" width="11" height="12" viewBox="0 0 11 12"><path d="M2.6 11.2 H0.6 V0.6 H8.6 V4.4" fill="none" stroke="#5a6580" stroke-width="1"/><path d="M3.4 5 Q4.6 3.2 6.4 3.8" fill="none" stroke="#3f86e0" stroke-width="1.4" stroke-linecap="round"/><path d="M7 7.2 V11.8 M4.6 9.5 H9.4" stroke="#5a6580" stroke-width="1.2"/></svg><span>新增检查记录</span></td><td class="c8"><svg class="ic" width="11" height="12" viewBox="0 0 11 12"><path d="M2.6 11.2 H0.6 V0.6 H8.6 V4.4" fill="none" stroke="#5a6580" stroke-width="1"/><path d="M2.6 2.2 H5 L4.2 4.4 H5.4 L3.4 7.6 L3.7 5.4 H2.6Z" fill="#f59a0c"/><path d="M7 7.2 V11.8 M4.6 9.5 H9.4" stroke="#5a6580" stroke-width="1.2"/></svg><span>新增问题</span></td></tr>
<tr><td class="c1">5</td><td class="c2"><svg class="ed" width="12" height="12" viewBox="0 0 12 12"><rect x="0.6" y="0.9" width="10.2" height="10.2" fill="#fff" stroke="#5f6a85" stroke-width="1"/><path d="M3.6 8 L7.9 3.9" stroke="#3fae49" stroke-width="1.4" stroke-linecap="round"/></svg></td><td class="c3">EI-170</td><td class="c4">软件低层需⋯</td><td class="c5">ABC</td><td class="c6"><i class="tg"></i></td><td class="c7"><svg class="ic" width="11" height="12" viewBox="0 0 11 12"><path d="M2.6 11.2 H0.6 V0.6 H8.6 V4.4" fill="none" stroke="#5a6580" stroke-width="1"/><path d="M3.4 5 Q4.6 3.2 6.4 3.8" fill="none" stroke="#3f86e0" stroke-width="1.4" stroke-linecap="round"/><path d="M7 7.2 V11.8 M4.6 9.5 H9.4" stroke="#5a6580" stroke-width="1.2"/></svg><span>新增检查记录</span></td><td class="c8"><svg class="ic" width="11" height="12" viewBox="0 0 11 12"><path d="M2.6 11.2 H0.6 V0.6 H8.6 V4.4" fill="none" stroke="#5a6580" stroke-width="1"/><path d="M2.6 2.2 H5 L4.2 4.4 H5.4 L3.4 7.6 L3.7 5.4 H2.6Z" fill="#f59a0c"/><path d="M7 7.2 V11.8 M4.6 9.5 H9.4" stroke="#5a6580" stroke-width="1.2"/></svg><span>新增问题</span></td></tr>
<tr><td class="c1">6</td><td class="c2"><svg class="ed" width="12" height="12" viewBox="0 0 12 12"><rect x="0.6" y="0.9" width="10.2" height="10.2" fill="#fff" stroke="#5f6a85" stroke-width="1"/><path d="M3.6 8 L7.9 3.9" stroke="#3fae49" stroke-width="1.4" stroke-linecap="round"/></svg></td><td class="c3">EI-171</td><td class="c4">软件低层需⋯</td><td class="c5">AB</td><td class="c6"><i class="tg"></i></td><td class="c7"><svg class="ic" width="11" height="12" viewBox="0 0 11 12"><path d="M2.6 11.2 H0.6 V0.6 H8.6 V4.4" fill="none" stroke="#5a6580" stroke-width="1"/><path d="M3.4 5 Q4.6 3.2 6.4 3.8" fill="none" stroke="#3f86e0" stroke-width="1.4" stroke-linecap="round"/><path d="M7 7.2 V11.8 M4.6 9.5 H9.4" stroke="#5a6580" stroke-width="1.2"/></svg><span>新增检查记录</span></td><td class="c8"><svg class="ic" width="11" height="12" viewBox="0 0 11 12"><path d="M2.6 11.2 H0.6 V0.6 H8.6 V4.4" fill="none" stroke="#5a6580" stroke-width="1"/><path d="M2.6 2.2 H5 L4.2 4.4 H5.4 L3.4 7.6 L3.7 5.4 H2.6Z" fill="#f59a0c"/><path d="M7 7.2 V11.8 M4.6 9.5 H9.4" stroke="#5a6580" stroke-width="1.2"/></svg><span>新增问题</span></td></tr>
<tr><td class="c1">7</td><td class="c2"><svg class="ed" width="12" height="12" viewBox="0 0 12 12"><rect x="0.6" y="0.9" width="10.2" height="10.2" fill="#fff" stroke="#5f6a85" stroke-width="1"/><path d="M3.6 8 L7.9 3.9" stroke="#3fae49" stroke-width="1.4" stroke-linecap="round"/></svg></td><td class="c3">EI-172</td><td class="c4">软件低层需⋯</td><td class="c5">AB</td><td class="c6"><i class="tg"></i></td><td class="c7"><svg class="ic" width="11" height="12" viewBox="0 0 11 12"><path d="M2.6 11.2 H0.6 V0.6 H8.6 V4.4" fill="none" stroke="#5a6580" stroke-width="1"/><path d="M3.4 5 Q4.6 3.2 6.4 3.8" fill="none" stroke="#3f86e0" stroke-width="1.4" stroke-linecap="round"/><path d="M7 7.2 V11.8 M4.6 9.5 H9.4" stroke="#5a6580" stroke-width="1.2"/></svg><span>新增检查记录</span></td><td class="c8"><svg class="ic" width="11" height="12" viewBox="0 0 11 12"><path d="M2.6 11.2 H0.6 V0.6 H8.6 V4.4" fill="none" stroke="#5a6580" stroke-width="1"/><path d="M2.6 2.2 H5 L4.2 4.4 H5.4 L3.4 7.6 L3.7 5.4 H2.6Z" fill="#f59a0c"/><path d="M7 7.2 V11.8 M4.6 9.5 H9.4" stroke="#5a6580" stroke-width="1.2"/></svg><span>新增问题</span></td></tr>
<tr><td class="c1">8</td><td class="c2"><svg class="ed" width="12" height="12" viewBox="0 0 12 12"><rect x="0.6" y="0.9" width="10.2" height="10.2" fill="#fff" stroke="#5f6a85" stroke-width="1"/><path d="M3.6 8 L7.9 3.9" stroke="#3fae49" stroke-width="1.4" stroke-linecap="round"/></svg></td><td class="c3">EI-173</td><td class="c4">软件低层需⋯</td><td class="c5">ABC</td><td class="c6"><i class="tg"></i></td><td class="c7"><svg class="ic" width="11" height="12" viewBox="0 0 11 12"><path d="M2.6 11.2 H0.6 V0.6 H8.6 V4.4" fill="none" stroke="#5a6580" stroke-width="1"/><path d="M3.4 5 Q4.6 3.2 6.4 3.8" fill="none" stroke="#3f86e0" stroke-width="1.4" stroke-linecap="round"/><path d="M7 7.2 V11.8 M4.6 9.5 H9.4" stroke="#5a6580" stroke-width="1.2"/></svg><span>新增检查记录</span></td><td class="c8"><svg class="ic" width="11" height="12" viewBox="0 0 11 12"><path d="M2.6 11.2 H0.6 V0.6 H8.6 V4.4" fill="none" stroke="#5a6580" stroke-width="1"/><path d="M2.6 2.2 H5 L4.2 4.4 H5.4 L3.4 7.6 L3.7 5.4 H2.6Z" fill="#f59a0c"/><path d="M7 7.2 V11.8 M4.6 9.5 H9.4" stroke="#5a6580" stroke-width="1.2"/></svg><span>新增问题</span></td></tr>
<tr><td class="c1">9</td><td class="c2"><svg class="ed" width="12" height="12" viewBox="0 0 12 12"><rect x="0.6" y="0.9" width="10.2" height="10.2" fill="#fff" stroke="#5f6a85" stroke-width="1"/><path d="M3.6 8 L7.9 3.9" stroke="#3fae49" stroke-width="1.4" stroke-linecap="round"/></svg></td><td class="c3">EI-174</td><td class="c4">所追溯的软⋯</td><td class="c5">ABC</td><td class="c6"><i class="tg"></i></td><td class="c7"><svg class="ic" width="11" height="12" viewBox="0 0 11 12"><path d="M2.6 11.2 H0.6 V0.6 H8.6 V4.4" fill="none" stroke="#5a6580" stroke-width="1"/><path d="M3.4 5 Q4.6 3.2 6.4 3.8" fill="none" stroke="#3f86e0" stroke-width="1.4" stroke-linecap="round"/><path d="M7 7.2 V11.8 M4.6 9.5 H9.4" stroke="#5a6580" stroke-width="1.2"/></svg><span>新增检查记录</span></td><td class="c8"><svg class="ic" width="11" height="12" viewBox="0 0 11 12"><path d="M2.6 11.2 H0.6 V0.6 H8.6 V4.4" fill="none" stroke="#5a6580" stroke-width="1"/><path d="M2.6 2.2 H5 L4.2 4.4 H5.4 L3.4 7.6 L3.7 5.4 H2.6Z" fill="#f59a0c"/><path d="M7 7.2 V11.8 M4.6 9.5 H9.4" stroke="#5a6580" stroke-width="1.2"/></svg><span>新增问题</span></td></tr>
<tr><td class="c1">10</td><td class="c2"><svg class="ed" width="12" height="12" viewBox="0 0 12 12"><rect x="0.6" y="0.9" width="10.2" height="10.2" fill="#fff" stroke="#5f6a85" stroke-width="1"/><path d="M3.6 8 L7.9 3.9" stroke="#3fae49" stroke-width="1.4" stroke-linecap="round"/></svg></td><td class="c3">EI-175</td><td class="c4">软件低层需⋯</td><td class="c5">ABC</td><td class="c6"><i class="tg"></i></td><td class="c7"><svg class="ic" width="11" height="12" viewBox="0 0 11 12"><path d="M2.6 11.2 H0.6 V0.6 H8.6 V4.4" fill="none" stroke="#5a6580" stroke-width="1"/><path d="M3.4 5 Q4.6 3.2 6.4 3.8" fill="none" stroke="#3f86e0" stroke-width="1.4" stroke-linecap="round"/><path d="M7 7.2 V11.8 M4.6 9.5 H9.4" stroke="#5a6580" stroke-width="1.2"/></svg><span>新增检查记录</span></td><td class="c8"><svg class="ic" width="11" height="12" viewBox="0 0 11 12"><path d="M2.6 11.2 H0.6 V0.6 H8.6 V4.4" fill="none" stroke="#5a6580" stroke-width="1"/><path d="M2.6 2.2 H5 L4.2 4.4 H5.4 L3.4 7.6 L3.7 5.4 H2.6Z" fill="#f59a0c"/><path d="M7 7.2 V11.8 M4.6 9.5 H9.4" stroke="#5a6580" stroke-width="1.2"/></svg><span>新增问题</span></td></tr>
<tr><td class="c1">11</td><td class="c2"><svg class="ed" width="12" height="12" viewBox="0 0 12 12"><rect x="0.6" y="0.9" width="10.2" height="10.2" fill="#fff" stroke="#5f6a85" stroke-width="1"/><path d="M3.6 8 L7.9 3.9" stroke="#3fae49" stroke-width="1.4" stroke-linecap="round"/></svg></td><td class="c3">EI-176</td><td class="c4">软件低层需⋯</td><td class="c5">ABC</td><td class="c6"><i class="tg"></i></td><td class="c7"><svg class="ic" width="11" height="12" viewBox="0 0 11 12"><path d="M2.6 11.2 H0.6 V0.6 H8.6 V4.4" fill="none" stroke="#5a6580" stroke-width="1"/><path d="M3.4 5 Q4.6 3.2 6.4 3.8" fill="none" stroke="#3f86e0" stroke-width="1.4" stroke-linecap="round"/><path d="M7 7.2 V11.8 M4.6 9.5 H9.4" stroke="#5a6580" stroke-width="1.2"/></svg><span>新增检查记录</span></td><td class="c8"><svg class="ic" width="11" height="12" viewBox="0 0 11 12"><path d="M2.6 11.2 H0.6 V0.6 H8.6 V4.4" fill="none" stroke="#5a6580" stroke-width="1"/><path d="M2.6 2.2 H5 L4.2 4.4 H5.4 L3.4 7.6 L3.7 5.4 H2.6Z" fill="#f59a0c"/><path d="M7 7.2 V11.8 M4.6 9.5 H9.4" stroke="#5a6580" stroke-width="1.2"/></svg><span>新增问题</span></td></tr>
<tr><td class="c1">12</td><td class="c2"><svg class="ed" width="12" height="12" viewBox="0 0 12 12"><rect x="0.6" y="0.9" width="10.2" height="10.2" fill="#fff" stroke="#5f6a85" stroke-width="1"/><path d="M3.6 8 L7.9 3.9" stroke="#3fae49" stroke-width="1.4" stroke-linecap="round"/></svg></td><td class="c3">EI-177</td><td class="c4">软件低层需⋯</td><td class="c5">ABC</td><td class="c6"><i class="tg"></i></td><td class="c7"><svg class="ic" width="11" height="12" viewBox="0 0 11 12"><path d="M2.6 11.2 H0.6 V0.6 H8.6 V4.4" fill="none" stroke="#5a6580" stroke-width="1"/><path d="M3.4 5 Q4.6 3.2 6.4 3.8" fill="none" stroke="#3f86e0" stroke-width="1.4" stroke-linecap="round"/><path d="M7 7.2 V11.8 M4.6 9.5 H9.4" stroke="#5a6580" stroke-width="1.2"/></svg><span>新增检查记录</span></td><td class="c8"><svg class="ic" width="11" height="12" viewBox="0 0 11 12"><path d="M2.6 11.2 H0.6 V0.6 H8.6 V4.4" fill="none" stroke="#5a6580" stroke-width="1"/><path d="M2.6 2.2 H5 L4.2 4.4 H5.4 L3.4 7.6 L3.7 5.4 H2.6Z" fill="#f59a0c"/><path d="M7 7.2 V11.8 M4.6 9.5 H9.4" stroke="#5a6580" stroke-width="1.2"/></svg><span>新增问题</span></td></tr>
<tr><td class="c1">13</td><td class="c2"><svg class="ed" width="12" height="12" viewBox="0 0 12 12"><rect x="0.6" y="0.9" width="10.2" height="10.2" fill="#fff" stroke="#5f6a85" stroke-width="1"/><path d="M3.6 8 L7.9 3.9" stroke="#3fae49" stroke-width="1.4" stroke-linecap="round"/></svg></td><td class="c3">EI-178</td><td class="c4">软件低层需⋯</td><td class="c5">ABC</td><td class="c6"><i class="tg"></i></td><td class="c7"><svg class="ic" width="11" height="12" viewBox="0 0 11 12"><path d="M2.6 11.2 H0.6 V0.6 H8.6 V4.4" fill="none" stroke="#5a6580" stroke-width="1"/><path d="M3.4 5 Q4.6 3.2 6.4 3.8" fill="none" stroke="#3f86e0" stroke-width="1.4" stroke-linecap="round"/><path d="M7 7.2 V11.8 M4.6 9.5 H9.4" stroke="#5a6580" stroke-width="1.2"/></svg><span>新增检查记录</span></td><td class="c8"><svg class="ic" width="11" height="12" viewBox="0 0 11 12"><path d="M2.6 11.2 H0.6 V0.6 H8.6 V4.4" fill="none" stroke="#5a6580" stroke-width="1"/><path d="M2.6 2.2 H5 L4.2 4.4 H5.4 L3.4 7.6 L3.7 5.4 H2.6Z" fill="#f59a0c"/><path d="M7 7.2 V11.8 M4.6 9.5 H9.4" stroke="#5a6580" stroke-width="1.2"/></svg><span>新增问题</span></td></tr>
<tr><td class="c1">14</td><td class="c2"><svg class="ed" width="12" height="12" viewBox="0 0 12 12"><rect x="0.6" y="0.9" width="10.2" height="10.2" fill="#fff" stroke="#5f6a85" stroke-width="1"/><path d="M3.6 8 L7.9 3.9" stroke="#3fae49" stroke-width="1.4" stroke-linecap="round"/></svg></td><td class="c3">EI-179</td><td class="c4">派生的软件⋯</td><td class="c5">ABC</td><td class="c6"><i class="tg"></i></td><td class="c7"><svg class="ic" width="11" height="12" viewBox="0 0 11 12"><path d="M2.6 11.2 H0.6 V0.6 H8.6 V4.4" fill="none" stroke="#5a6580" stroke-width="1"/><path d="M3.4 5 Q4.6 3.2 6.4 3.8" fill="none" stroke="#3f86e0" stroke-width="1.4" stroke-linecap="round"/><path d="M7 7.2 V11.8 M4.6 9.5 H9.4" stroke="#5a6580" stroke-width="1.2"/></svg><span>新增检查记录</span></td><td class="c8"><svg class="ic" width="11" height="12" viewBox="0 0 11 12"><path d="M2.6 11.2 H0.6 V0.6 H8.6 V4.4" fill="none" stroke="#5a6580" stroke-width="1"/><path d="M2.6 2.2 H5 L4.2 4.4 H5.4 L3.4 7.6 L3.7 5.4 H2.6Z" fill="#f59a0c"/><path d="M7 7.2 V11.8 M4.6 9.5 H9.4" stroke="#5a6580" stroke-width="1.2"/></svg><span>新增问题</span></td></tr>
<tr><td class="c1">15</td><td class="c2"><svg class="ed" width="12" height="12" viewBox="0 0 12 12"><rect x="0.6" y="0.9" width="10.2" height="10.2" fill="#fff" stroke="#5f6a85" stroke-width="1"/><path d="M3.6 8 L7.9 3.9" stroke="#3fae49" stroke-width="1.4" stroke-linecap="round"/></svg></td><td class="c3">EI-180</td><td class="c4">派生的软件⋯</td><td class="c5">ABC</td><td class="c6"><i class="tg"></i></td><td class="c7"><svg class="ic" width="11" height="12" viewBox="0 0 11 12"><path d="M2.6 11.2 H0.6 V0.6 H8.6 V4.4" fill="none" stroke="#5a6580" stroke-width="1"/><path d="M3.4 5 Q4.6 3.2 6.4 3.8" fill="none" stroke="#3f86e0" stroke-width="1.4" stroke-linecap="round"/><path d="M7 7.2 V11.8 M4.6 9.5 H9.4" stroke="#5a6580" stroke-width="1.2"/></svg><span>新增检查记录</span></td><td class="c8"><svg class="ic" width="11" height="12" viewBox="0 0 11 12"><path d="M2.6 11.2 H0.6 V0.6 H8.6 V4.4" fill="none" stroke="#5a6580" stroke-width="1"/><path d="M2.6 2.2 H5 L4.2 4.4 H5.4 L3.4 7.6 L3.7 5.4 H2.6Z" fill="#f59a0c"/><path d="M7 7.2 V11.8 M4.6 9.5 H9.4" stroke="#5a6580" stroke-width="1.2"/></svg><span>新增问题</span></td></tr>
<tr><td class="c1">16</td><td class="c2"><svg class="ed" width="12" height="12" viewBox="0 0 12 12"><rect x="0.6" y="0.9" width="10.2" height="10.2" fill="#fff" stroke="#5f6a85" stroke-width="1"/><path d="M3.6 8 L7.9 3.9" stroke="#3fae49" stroke-width="1.4" stroke-linecap="round"/></svg></td><td class="c3">EI-181</td><td class="c4">该需求的衍⋯</td><td class="c5">ABC</td><td class="c6"><i class="tg"></i></td><td class="c7"><svg class="ic" width="11" height="12" viewBox="0 0 11 12"><path d="M2.6 11.2 H0.6 V0.6 H8.6 V4.4" fill="none" stroke="#5a6580" stroke-width="1"/><path d="M3.4 5 Q4.6 3.2 6.4 3.8" fill="none" stroke="#3f86e0" stroke-width="1.4" stroke-linecap="round"/><path d="M7 7.2 V11.8 M4.6 9.5 H9.4" stroke="#5a6580" stroke-width="1.2"/></svg><span>新增检查记录</span></td><td class="c8"><svg class="ic" width="11" height="12" viewBox="0 0 11 12"><path d="M2.6 11.2 H0.6 V0.6 H8.6 V4.4" fill="none" stroke="#5a6580" stroke-width="1"/><path d="M2.6 2.2 H5 L4.2 4.4 H5.4 L3.4 7.6 L3.7 5.4 H2.6Z" fill="#f59a0c"/><path d="M7 7.2 V11.8 M4.6 9.5 H9.4" stroke="#5a6580" stroke-width="1.2"/></svg><span>新增问题</span></td></tr>
<tr><td class="c1">17</td><td class="c2"><svg class="ed" width="12" height="12" viewBox="0 0 12 12"><rect x="0.6" y="0.9" width="10.2" height="10.2" fill="#fff" stroke="#5f6a85" stroke-width="1"/><path d="M3.6 8 L7.9 3.9" stroke="#3fae49" stroke-width="1.4" stroke-linecap="round"/></svg></td><td class="c3">EI-182</td><td class="c4">工法里测试⋯</td><td class="c5">ABC</td><td class="c6"><i class="tg"></i></td><td class="c7"><svg class="ic" width="11" height="12" viewBox="0 0 11 12"><path d="M2.6 11.2 H0.6 V0.6 H8.6 V4.4" fill="none" stroke="#5a6580" stroke-width="1"/><path d="M3.4 5 Q4.6 3.2 6.4 3.8" fill="none" stroke="#3f86e0" stroke-width="1.4" stroke-linecap="round"/><path d="M7 7.2 V11.8 M4.6 9.5 H9.4" stroke="#5a6580" stroke-width="1.2"/></svg><span>新增检查记录</span></td><td class="c8"><svg class="ic" width="11" height="12" viewBox="0 0 11 12"><path d="M2.6 11.2 H0.6 V0.6 H8.6 V4.4" fill="none" stroke="#5a6580" stroke-width="1"/><path d="M2.6 2.2 H5 L4.2 4.4 H5.4 L3.4 7.6 L3.7 5.4 H2.6Z" fill="#f59a0c"/><path d="M7 7.2 V11.8 M4.6 9.5 H9.4" stroke="#5a6580" stroke-width="1.2"/></svg><span>新增问题</span></td></tr>
</tbody></table>
</div>
<div class="abs" id="frleft"></div>
<div class="abs" id="frbot"></div>
<svg class="abs" style="left:0;top:742px" width="8" height="8" viewBox="0 0 8 8"><path d="M0 0 V8 H8 V6.6 H5.6 Q1.2 6.6 1.2 2.2 V0Z" fill="#8a8d90"/></svg>
</body></html>
